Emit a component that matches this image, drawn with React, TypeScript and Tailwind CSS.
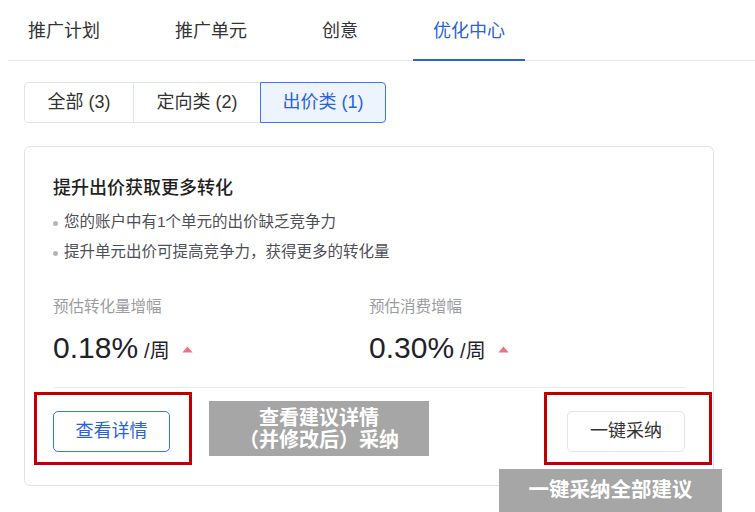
import React, { useState } from "react";

const tabs = ["推广计划", "推广单元", "创意", "优化中心"];

const filters = [
  { label: "全部 (3)", width: "w-[110px]" },
  { label: "定向类 (2)", width: "w-[128px]" },
  { label: "出价类 (1)", width: "w-[126px]" },
];

function UpArrow() {
  return (
    <svg width="11" height="7" viewBox="0 0 11 7" className="ml-3 mt-[2px] self-center">
      <path d="M5.5 0.5 L10.6 6.6 L0.4 6.6 Z" fill="#f36f7d" />
    </svg>
  );
}

function Metric({ label, value }: { label: string; value: string }) {
  return (
    <div className="flex flex-col">
      <div className="text-[15.5px] leading-[22px] text-[#9a9ca3]">{label}</div>
      <div className="mt-3 flex h-[36px] items-baseline text-[#1f2329]">
        <span className="text-[30px] leading-[36px]">{value}</span>
        <span className="ml-[6px] text-[20px] leading-[36px]">/周</span>
        <UpArrow />
      </div>
    </div>
  );
}

export default function App() {
  const [activeTab, setActiveTab] = useState(3);
  const [activeFilter, setActiveFilter] = useState(2);

  return (
    <div className="relative h-[512px] w-[755px] overflow-hidden bg-white font-['Liberation_Sans','Noto_Sans_CJK_SC',sans-serif]">
      {/* Top tabs */}
      <div className="ml-2 flex gap-[35px] border-b border-[#e4e7ee]">
        {tabs.map((t, i) => (
          <button
            key={t}
            onClick={() => setActiveTab(i)}
            className={
              "-mb-px flex h-[61px] items-center border-b-2 px-5 pt-[4px] text-[18px] " +
              (i === activeTab ? "border-[#2b63d6] text-[#2b63d6]" : "border-transparent text-[#333333]")
            }
          >
            {t}
          </button>
        ))}
      </div>

      {/* Filter segments */}
      <div className="ml-6 mt-[21px] flex">
        {filters.map((f, i) => {
          const active = i === activeFilter;
          return (
            <button
              key={f.label}
              onClick={() => setActiveFilter(i)}
              className={
                "flex h-[41px] items-center justify-center border text-[18px] " +
                f.width +
                (i > 0 ? " -ml-px" : "") +
                (i === 0 ? " rounded-l-[4px]" : "") +
                (i === filters.length - 1 ? " rounded-r-[4px]" : "") +
                (active
                  ? " relative z-10 border-[#3c78e5] bg-[#eef4fe] text-[#2b63d6]"
                  : " border-[#dfe3eb] text-[#333333]")
              }
            >
              {f.label}
            </button>
          );
        })}
      </div>

      {/* Suggestion card */}
      <div className="ml-6 mt-[23px] w-[690px] rounded-[6px] border border-[#dde2ec] px-7 pb-[33px] pt-7">
        <div className="text-[18px] font-medium leading-[26px] text-[#1f1f1f]">提升出价获取更多转化</div>
        <div className="mt-[9px] flex flex-col gap-[6px] text-[15.5px] leading-[24px] text-[#4e5058]">
          <div className="flex items-center">
            <span className="mr-[6px] mt-[2px] h-[5px] w-[5px] rounded-full bg-[#b4b6bb]" />
            您的账户中有1个单元的出价缺乏竞争力
          </div>
          <div className="flex items-center">
            <span className="mr-[6px] mt-[2px] h-[5px] w-[5px] rounded-full bg-[#b4b6bb]" />
            提升单元出价可提高竞争力，获得更多的转化量
          </div>
        </div>

        <div className="mt-8 grid grid-cols-2">
          <Metric label="预估转化量增幅" value="0.18%" />
          <Metric label="预估消费增幅" value="0.30%" />
        </div>

        <div className="mt-[21px] h-px bg-[#e8ebf0]" />

        <div className="mt-[23px] flex justify-between">
          <button className="h-[41px] w-[117px] rounded-[5px] border border-[#3c78e5] text-[18px] text-[#2b63d6]">
            查看详情
          </button>
          <button className="h-[41px] w-[118px] rounded-[5px] border border-[#e1e4ea] text-[18px] text-[#333333]">
            一键采纳
          </button>
        </div>
      </div>

      {/* Callouts */}
      <div className="absolute left-[34px] top-[392px] h-[73px] w-[158px] border-[3px] border-[#c00000]" />
      <div className="absolute left-[544px] top-[392px] h-[73px] w-[168px] border-[3px] border-[#c00000]" />
      <div className="absolute left-[209px] top-[401px] flex h-[55px] w-[220px] flex-col items-center justify-center bg-[#a6a6a6] text-[20px] font-bold leading-[22px] text-white">
        <span>查看建议详情</span>
        <span>（并修改后）采纳</span>
      </div>
      <div className="absolute left-[499px] top-[469px] flex h-[43px] w-[223px] items-center justify-center bg-[#a6a6a6] text-[20.5px] font-bold text-white">
        一键采纳全部建议
      </div>
    </div>
  );
}
